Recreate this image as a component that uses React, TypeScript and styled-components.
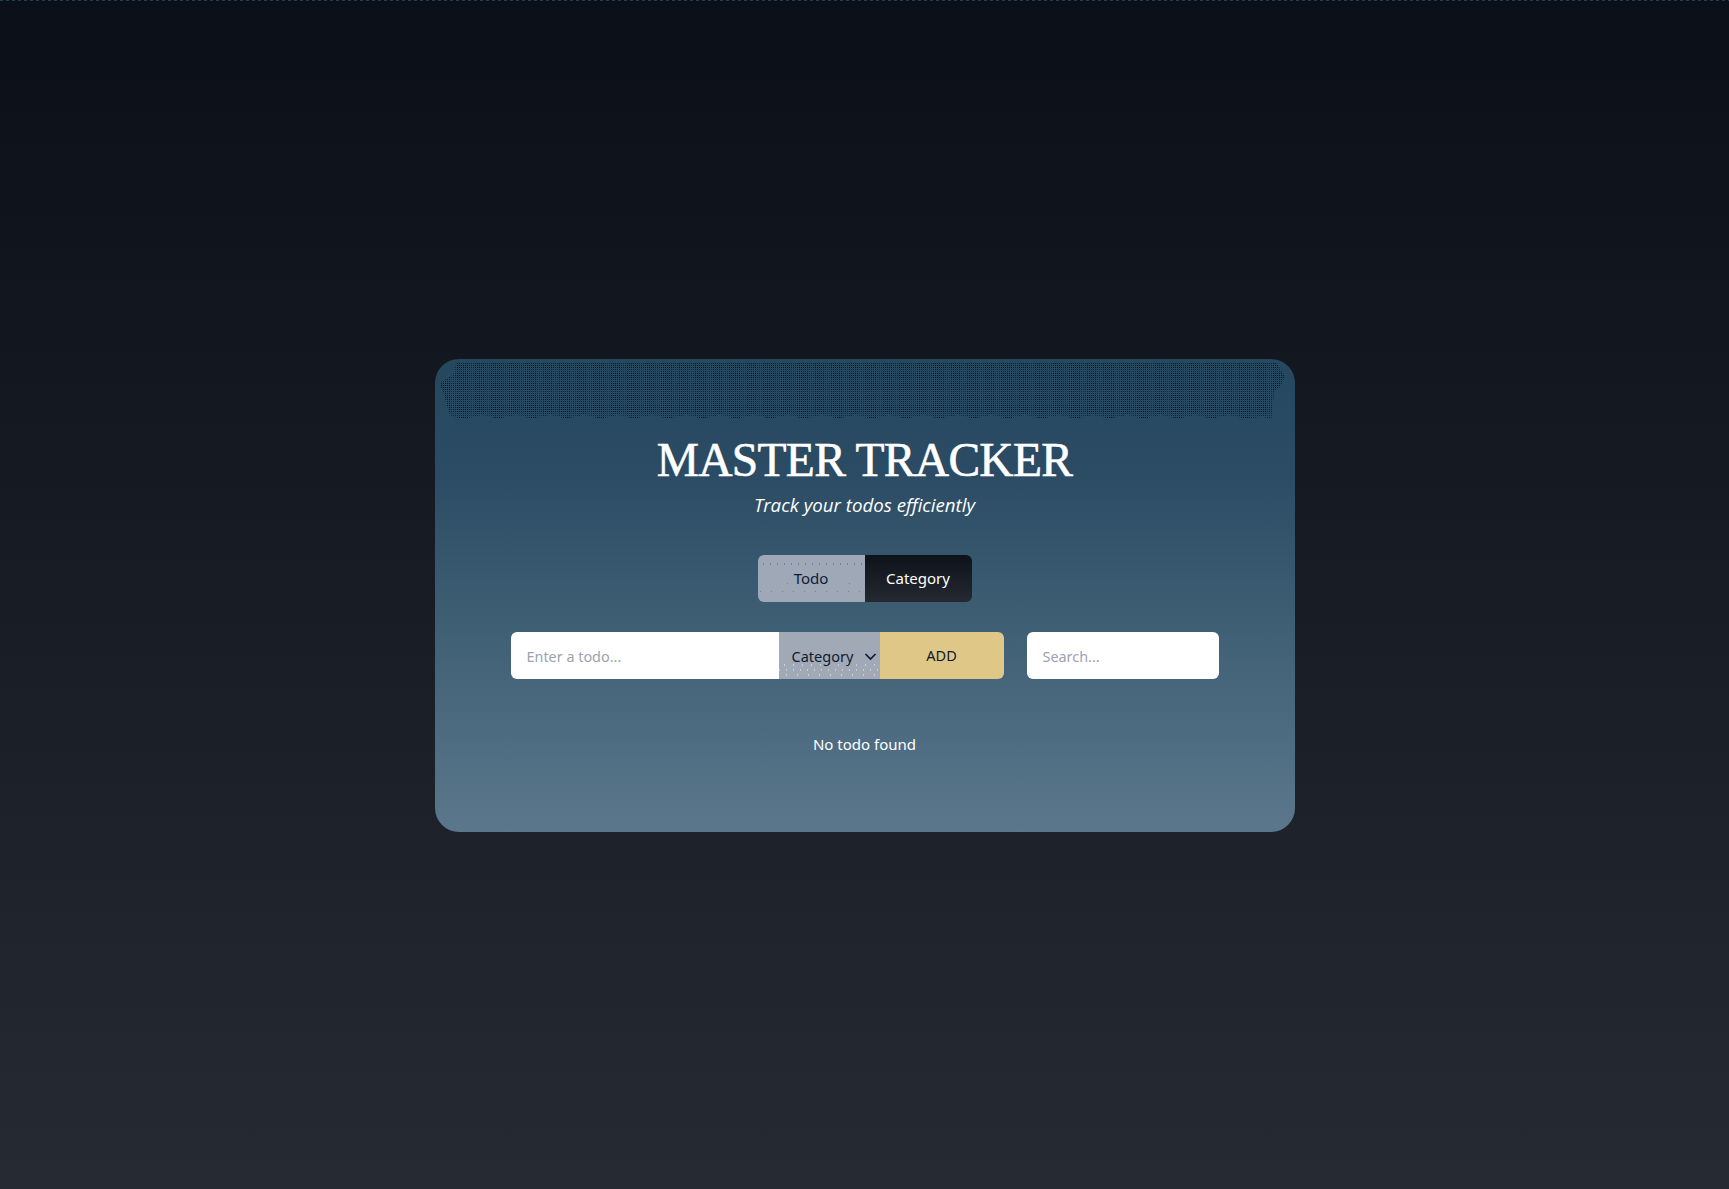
import styled, { createGlobalStyle } from "styled-components";

const GlobalStyle = createGlobalStyle`
  html, body {
    margin: 0;
    padding: 0;
  }
  body {
    font-family: "Noto Sans", "Open Sans", sans-serif;
    background: #0b0f17;
  }
  * {
    box-sizing: border-box;
  }
`;

const Page = styled.main`
  min-height: 1189px;
  padding-top: 2px;
  display: flex;
  align-items: center;
  justify-content: center;
  background:
    repeating-linear-gradient(90deg, #223c52 0 3px, #0c1119 3px 6px) top / 100% 1px no-repeat,
    linear-gradient(180deg, #0b0f17 0%, #252a33 100%);
`;

const Card = styled.section`
  position: relative;
  width: 860px;
  height: 473px;
  padding: 73px 76px 0;
  border-radius: 24px;
  overflow: hidden;
  background: linear-gradient(180deg, #25485f 0%, #2b4c64 25%, #416176 60%, #5b778c 100%);
  display: flex;
  flex-direction: column;
  align-items: center;

  &::before {
    content: "";
    position: absolute;
    top: 2px;
    left: 5px;
    right: 6px;
    height: 62px;
    background: conic-gradient(#0b121d 25%, transparent 0) 0 0 / 2px 2px;
    mask-image:
      repeating-linear-gradient(90deg, #000 0 11px, rgba(0, 0, 0, 0.72) 11px 17px),
      repeating-linear-gradient(0deg, #000 0 7px, rgba(0, 0, 0, 0.72) 7px 11px);
    mask-composite: intersect;
    clip-path: polygon(
      2% 3%, 98.6% 3%, 99.6% 25%, 99% 42%, 98.3% 48%, 98% 94%, 97% 90%, 95% 93%, 93% 87%, 91% 93%,
      89% 87%, 87% 93%, 85% 87%, 83% 93%, 81% 87%, 79% 93%, 77% 87%, 75% 93%, 73% 87%, 71% 93%,
      69% 87%, 67% 93%, 65% 87%, 63% 93%, 61% 87%, 59% 93%, 57% 87%, 55% 93%, 53% 87%, 51% 93%,
      49% 87%, 47% 93%, 45% 87%, 43% 93%, 41% 87%, 39% 93%, 37% 87%, 35% 93%, 33% 87%, 31% 93%,
      29% 87%, 27% 93%, 25% 87%, 23% 93%, 21% 87%, 19% 93%, 17% 87%, 15% 93%, 13% 87%, 11% 93%,
      9% 87%, 7% 93%, 5% 87%, 3% 93%, 1.3% 90%, 0.4% 50%, 0 35%, 1.6% 22%
    );
  }
`;

const Title = styled.h1`
  position: relative;
  margin: 0;
  font-family: "Liberation Serif", serif;
  font-size: 47.5px;
  font-weight: 400;
  line-height: 56px;
  letter-spacing: -0.7px;
  -webkit-text-stroke: 0.6px #ffffff;
  color: #ffffff;
`;

const Subtitle = styled.p`
  margin: 3px 0 0;
  font-family: "Open Sans", sans-serif;
  font-size: 18.7px;
  font-style: italic;
  line-height: 28px;
  color: #ffffff;
`;

const Toggle = styled.div`
  display: flex;
  margin-top: 36px;
  border-radius: 6px;
  overflow: hidden;
`;

const ToggleButton = styled.button<{ $active?: boolean }>`
  all: unset;
  box-sizing: border-box;
  width: 107px;
  height: 47px;
  text-align: center;
  font-size: 15px;
  line-height: 47px;
  color: ${(p) => (p.$active ? "#ffffff" : "#0f1b3a")};
  background: ${(p) =>
    p.$active
      ? "linear-gradient(180deg, #0e1219, #242932)"
      : `radial-gradient(circle, #738296 0.5px, transparent 0.8px) 2px 6px / 7px 6px repeat-x,
         radial-gradient(circle, #738296 0.5px, transparent 0.8px) 8px 33px / 11px 7px repeat-x,
         radial-gradient(circle, #738296 0.5px, transparent 0.8px) 14px 23px / 31px 11px repeat-x,
         #9fa8b6`};
`;

const FormRow = styled.div`
  display: flex;
  gap: 23px;
  width: 100%;
  margin-top: 30px;
`;

const AddGroup = styled.div`
  display: flex;
  flex: 0 0 493px;
  height: 47px;
  border-radius: 6px;
  overflow: hidden;
`;

const TextInput = styled.input`
  all: unset;
  box-sizing: border-box;
  flex: 1;
  min-width: 0;
  padding: 1px 16px 0;
  background: #ffffff;
  font-size: 14.4px;
  color: #111827;

  &::placeholder {
    color: #9ca3af;
  }
`;

const SearchInput = styled(TextInput)`
  flex: 0 0 192px;
  height: 47px;
  border-radius: 6px;
`;

const SelectBox = styled.div`
  flex: 0 0 101px;
  display: flex;
  align-items: center;
  justify-content: space-between;
  padding: 1px 3px 0 13px;
  background:
    radial-gradient(circle, #c9cfd8 0.5px, transparent 0.8px) 1px 31px / 9px 4px repeat-x,
    radial-gradient(circle, #c9cfd8 0.5px, transparent 0.8px) 4px 36px / 7px 4px repeat-x,
    radial-gradient(circle, #c9cfd8 0.5px, transparent 0.8px) 2px 41px / 11px 4px repeat-x,
    #a1a9b6;
  color: #0f1b33;
  font-size: 14.5px;
`;

const AddButton = styled.button`
  all: unset;
  box-sizing: border-box;
  flex: 0 0 124px;
  padding-bottom: 1px;
  text-align: center;
  background: #dfc788;
  color: #111827;
  font-size: 14.5px;
`;

const EmptyText = styled.p`
  margin: 54px 0 0;
  font-size: 15px;
  line-height: 22px;
  color: #ffffff;
`;

export default function App() {
  return (
    <>
      <GlobalStyle />
      <Page>
        <Card>
          <Title>MASTER TRACKER</Title>
          <Subtitle>Track your todos efficiently</Subtitle>
          <Toggle>
            <ToggleButton>Todo</ToggleButton>
            <ToggleButton $active>Category</ToggleButton>
          </Toggle>
          <FormRow>
            <AddGroup>
              <TextInput placeholder="Enter a todo..." />
              <SelectBox>
                Category
                <svg width="13" height="13" viewBox="0 0 13 13" fill="none" stroke="#0f1b33" strokeWidth="1.7">
                  <path d="M1.5 4l5 5 5-5" />
                </svg>
              </SelectBox>
              <AddButton>ADD</AddButton>
            </AddGroup>
            <SearchInput placeholder="Search..." />
          </FormRow>
          <EmptyText>No todo found</EmptyText>
        </Card>
      </Page>
    </>
  );
}
